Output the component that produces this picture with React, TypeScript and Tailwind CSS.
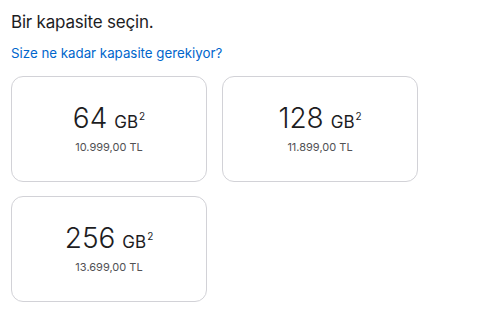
const options = [
  { size: "64", price: "10.999,00 TL" },
  { size: "128", price: "11.899,00 TL" },
  { size: "256", price: "13.699,00 TL" },
];

export default function App() {
  return (
    <div className="min-h-[331px] bg-white pl-[11px] pt-[11px] font-['Inter',sans-serif] text-[#1d1d1f]">
      <h2 className="text-[17px] leading-[22px] font-normal tracking-[-0.2px]">Bir kapasite seçin.</h2>
      <a href="#" className="mt-[11px] block text-[13.3px] leading-[18px] text-[#0066cc]">
        Size ne kadar kapasite gerekiyor?
      </a>
      <div className="mt-[14px] grid w-[407px] grid-cols-[196px_196px] gap-x-[15px] gap-y-[14px]">
        {options.map((o) => (
          <button
            key={o.size}
            className="flex h-[106px] flex-col items-center justify-center rounded-[12px] border border-[#d2d2d7] bg-white"
          >
            <span className="flex items-baseline leading-none">
              <span className="text-[28px] font-light">{o.size}</span>
              <span className="ml-[7px] text-[17px]">GB</span>
              <span className="ml-[1px] self-start pt-[7px] text-[10px]">2</span>
            </span>
            <span className="mt-[8px] text-[11px] leading-[14px] text-[#515154]">{o.price}</span>
          </button>
        ))}
      </div>
    </div>
  );
}
